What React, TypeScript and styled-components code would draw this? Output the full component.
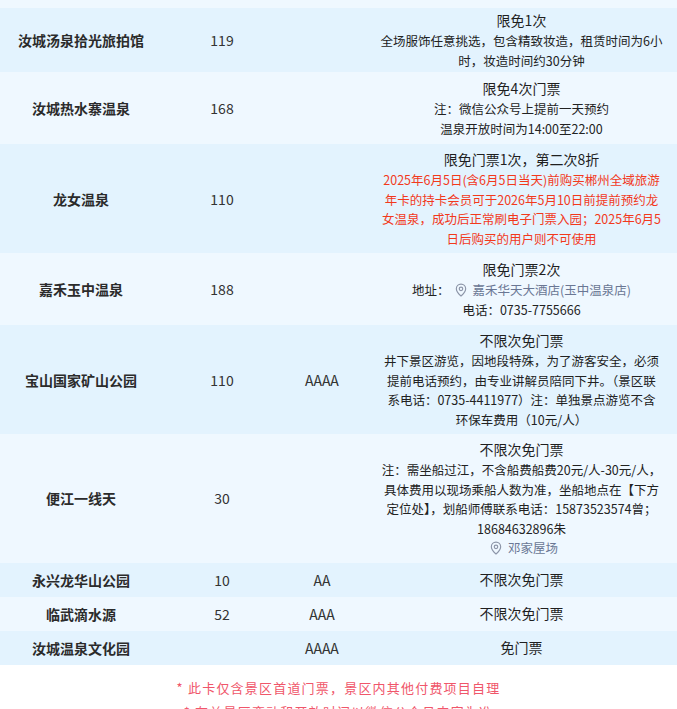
import * as React from 'react';
import styled, { createGlobalStyle } from 'styled-components';
import { MapPin } from 'lucide-react';

const GlobalStyle = createGlobalStyle`
  html, body {
    margin: 0;
    padding: 0;
    background: #fff;
  }
  body {
    font-family: "Noto Sans CJK SC", "Noto Sans", "Liberation Sans", sans-serif;
    color: #333;
  }
`;

const Page = styled.div`
  width: 677px;
  height: 709px;
  overflow: hidden;
`;

const TopEdge = styled.div`
  height: 8px;
  background: #eff8ff;
`;

const Row = styled.div<{ $alt?: boolean; $pad?: number }>`
  display: grid;
  grid-template-columns: 162px 120px 80px 1fr;
  align-items: center;
  min-height: 34px;
  padding: ${p => (p.$pad ?? 6)}px 0;
  box-sizing: border-box;
  background: ${p => (p.$alt ? '#eff8ff' : '#e3f3fe')};
`;

const Name = styled.div`
  text-align: center;
  font-size: 14px;
  font-weight: 700;
  color: #2b2b2b;
  line-height: 20px;
`;

const Cell = styled.div`
  text-align: center;
  font-size: 14px;
  color: #333;
  line-height: 20px;
`;

const Detail = styled.div`
  display: flex;
  flex-direction: column;
  align-items: center;
  padding: 0 8px 0 12px;
`;

const Title = styled.div`
  font-size: 14px;
  line-height: 21px;
  color: #1f1f1f;
  white-space: nowrap;
`;

const Line = styled.div<{ $red?: boolean }>`
  font-size: 12.5px;
  line-height: 19.5px;
  white-space: nowrap;
  color: ${p => (p.$red ? '#f2391c' : '#222')};
  display: flex;
  align-items: center;
`;

const Place = styled.span`
  display: inline-flex;
  align-items: center;
  gap: 5px;
  color: #6a7794;
  margin-left: 4px;

  svg {
    color: #8c95a8;
  }
`;

const Footer = styled.div`
  padding-top: 11px;
  text-align: center;
`;

const Note = styled.div`
  font-size: 13px;
  line-height: 24px;
  letter-spacing: 1.2px;
  color: #f0566a;
`;

type Spot = {
  name: string;
  price?: string;
  grade?: string;
  title: string;
  lines?: React.ReactNode[];
  red?: boolean;
  pad?: number;
};

const Location = ({ label }: { label: string }) => (
  <Place>
    <MapPin size={14} strokeWidth={2} />
    {label}
  </Place>
);

const spots: Spot[] = [
  {
    name: '汝城汤泉拾光旅拍馆',
    price: '119',
    title: '限免1次',
    pad: 2,
    lines: ['全场服饰任意挑选，包含精致妆造，租赁时间为6小', '时，妆造时间约30分钟'],
  },
  {
    name: '汝城热水寨温泉',
    price: '168',
    title: '限免4次门票',
    lines: ['注：微信公众号上提前一天预约', '温泉开放时间为14:00至22:00'],
  },
  {
    name: '龙女温泉',
    price: '110',
    title: '限免门票1次，第二次8折',
    red: true,
    pad: 5,
    lines: [
      '2025年6月5日(含6月5日当天)前购买郴州全域旅游',
      '年卡的持卡会员可于2026年5月10日前提前预约龙',
      '女温泉，成功后正常刷电子门票入园；2025年6月5',
      '日后购买的用户则不可使用',
    ],
  },
  {
    name: '嘉禾玉中温泉',
    price: '188',
    title: '限免门票2次',
    lines: [
      <>
        地址：<Location label="嘉禾华天大酒店(玉中温泉店)" />
      </>,
      '电话：0735-7755666',
    ],
  },
  {
    name: '宝山国家矿山公园',
    price: '110',
    grade: 'AAAA',
    title: '不限次免门票',
    pad: 5,
    lines: [
      '井下景区游览，因地段特殊，为了游客安全，必须',
      '提前电话预约，由专业讲解员陪同下井。（景区联',
      '系电话：0735-4411977）注：单独景点游览不含',
      '环保车费用（10元/人）',
    ],
  },
  {
    name: '便江一线天',
    price: '30',
    title: '不限次免门票',
    pad: 5,
    lines: [
      '注：需坐船过江，不含船费船费20元/人-30元/人，',
      '具体费用以现场乘船人数为准，坐船地点在【下方',
      '定位处】，划船师傅联系电话：15873523574曾；',
      '18684632896朱',
      <Location label="邓家屋场" />,
    ],
  },
  { name: '永兴龙华山公园', price: '10', grade: 'AA', title: '不限次免门票', pad: 0 },
  { name: '临武滴水源', price: '52', grade: 'AAA', title: '不限次免门票', pad: 0 },
  { name: '汝城温泉文化园', grade: 'AAAA', title: '免门票', pad: 0 },
];

export default function App() {
  return (
    <Page>
      <GlobalStyle />
      <TopEdge />
      {spots.map((s, i) => (
        <Row key={s.name} $alt={i % 2 === 1} $pad={s.pad}>
          <Name>{s.name}</Name>
          <Cell>{s.price}</Cell>
          <Cell>{s.grade}</Cell>
          <Detail>
            <Title>{s.title}</Title>
            {s.lines?.map((l, j) => (
              <Line key={j} $red={s.red}>
                {l}
              </Line>
            ))}
          </Detail>
        </Row>
      ))}
      <Footer>
        <Note>* 此卡仅含景区首道门票，景区内其他付费项目自理</Note>
        <Note>* 有关景区变动和开放时间以微信公众号内容为准</Note>
      </Footer>
    </Page>
  );
}
